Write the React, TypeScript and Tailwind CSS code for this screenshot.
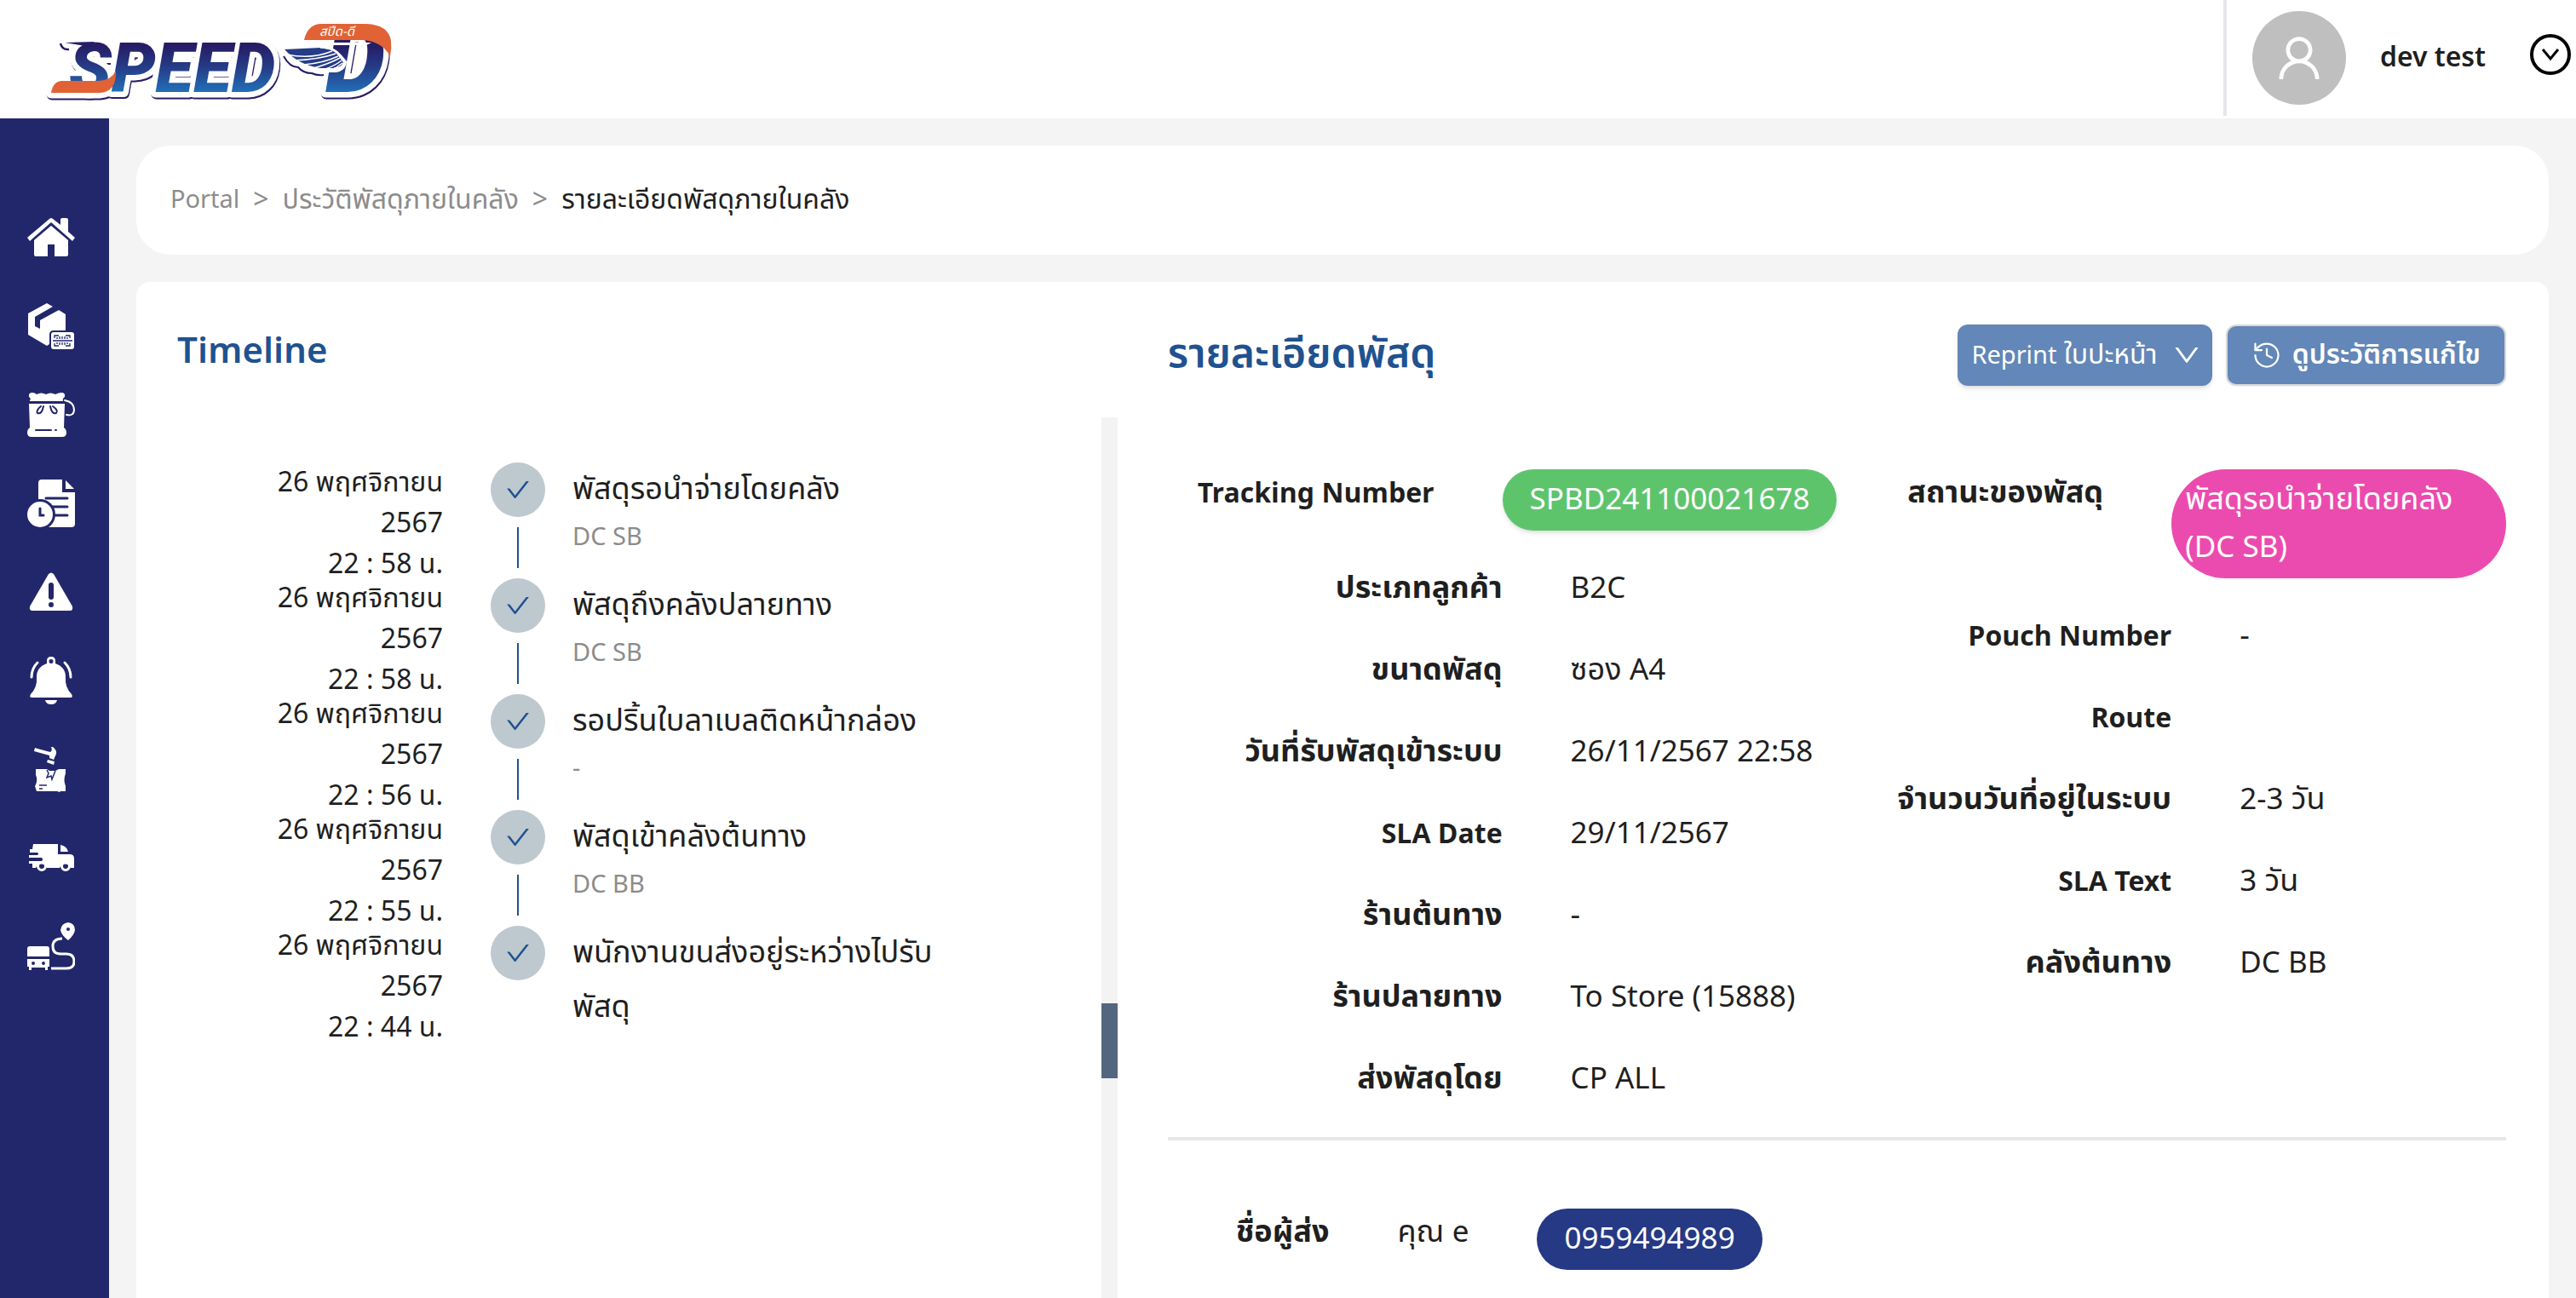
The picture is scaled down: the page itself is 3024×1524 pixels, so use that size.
import React from "react";
import { AiOutlineCheck, AiOutlineDown, AiOutlineUser } from "react-icons/ai";
import { History } from "lucide-react";

const NAVY = "#22276b";

function Logo() {
  return (
    <svg viewBox="50 10 430 120" className="h-[120px] w-[430px]" role="img" aria-label="SPEED-D">
      <defs>
        <linearGradient id="ink" gradientUnits="userSpaceOnUse" x1="0" y1="48" x2="0" y2="110">
          <stop offset="0.1" stopColor="#261d66" />
          <stop offset="0.5" stopColor="#263c87" />
          <stop offset="1" stopColor="#2173bb" />
        </linearGradient>
      </defs>
      {/* white outlined lettering with a dark drop edge */}
      <g
        className="[filter:drop-shadow(1px_2px_0_#261d66)]"
        stroke="#fff"
        strokeWidth="13"
        strokeLinejoin="round"
        paintOrder="stroke"
        fontFamily="Roboto"
        fontWeight="900"
        fontStyle="italic"
      >
        <path d="M60 109 Q62 96 72 95 H116 Q131 94 136 83 Q137 108 117 109 Z" fill="#fff" />
        <text x="81" y="108" fontSize="82" fill="url(#ink)">SPEED</text>
      </g>
      <g
        className="[filter:drop-shadow(1px_2px_0_#261d66)]"
        stroke="#fff"
        strokeWidth="13"
        strokeLinejoin="round"
        paintOrder="stroke"
        fontFamily="Roboto"
        fontWeight="900"
        fontStyle="italic"
      >
        <text x="382" y="108" fontSize="112" fill="url(#ink)">D</text>
      </g>
      <path d="M64 38 H334 V43 H64 Z" fill="#fff" />
      <path d="M76 50 L110 49 L112 56 Z" fill="#261d66" />
      <path d="M71 51 Q73 59 81 58" stroke="#261d66" strokeWidth="2.500" fill="none" />
      <path d="M60 109 Q62 96 72 95 H116 Q131 94 136 83 Q137 108 117 109 Z" fill="#e16335" />
      {/* orange cap of the D */}
      <path d="M350 16 H440 V24 H350 Z" fill="#fff" />
      <path d="M352 50 H436 L430 53 H352 Z" fill="#fff" />
      <path d="M357 47 Q361 29 376 28 H430 Q456 29 459 48 Q460 57 458 66 Q448 48 425 47 Z" fill="#e16335" />
      <text x="375" y="42" fontSize="15" fill="#fff" fontStyle="italic" fontFamily="Noto Sans Thai">สปีด-ดี</text>
      {/* wing */}
      <path d="M333 66 Q340 79 350 79 Q356 86 366 86 Q372 89 380 88" stroke="#261d66" strokeWidth="2" fill="none" />
      <path d="M334 58 L376 56 Q392 58 398 66 L404 73 Q402 82 391 82 H376 Q350 78 334 58 Z" fill="#263c87" stroke="#fff" strokeWidth="6" strokeLinejoin="round" />
      <path d="M334 58 L376 56 Q390 57 396 64 L403 73 Q401 80 391 80 H376 Q350 76 334 58 Z" fill="#263c87" />
      <path d="M337 64 Q365 70 390 60 M344 71 Q374 70 394 63 M356 76 Q380 74 397 66 M368 80 Q386 75 399 68 M379 82 Q392 78 401 71 M390 82 Q396 79 402 74" stroke="#fff" strokeWidth="1.500" fill="none" />
      <path d="M376 56 Q395 57 398 65 L404 73 Q402 81 392 80" stroke="#fff" strokeWidth="1.500" fill="none" />
    </svg>
  );
}

const navIcons: { label: string; art: React.ReactNode }[] = [
  {
    label: "Home",
    art: (
      <>
        <path d="M8 31 L28 14 L48 31 V48 Q48 50 46 50 H32 V36 H24 V50 H10 Q8 50 8 48 Z" />
        <path d="M39 7 Q39 5 41 5 H46 Q48 5 48 7 V21 L56 28 L53 32 L28 10 L3 32 L0 28 L26 6 Q28 4 30 6 L39 13 Z" />
      </>
    ),
  },
  {
    label: "Parcels",
    art: (
      <>
        <path d="M1 13 L23 1 L30 5 L9 17 V28 L15 31 V21 L37 9 L45 14 V33 H31 Q26 33 26 38 V49 L23 51 L1 38 Z" />
        <rect x="28" y="35" width="27" height="20" rx="3" />
        <path
          d="M32 42 V39 H37 M45 39 H50 V42 M32 48 V51 H37 M45 51 H50 V48 M30 45 H53 M35 41 V43 M38 40 V43 M41 40 V43 M44 40 V43 M47 41 V43 M35 47 V49 M38 47 V50 M41 47 V50 M44 47 V50 M47 47 V49"
          stroke={NAVY}
          strokeWidth="1.300"
          fill="none"
        />
      </>
    ),
  },
  {
    label: "Pouches",
    art: (
      <>
        <path d="M3 11 Q5 9 2 7 Q1 2 6 2 Q9 2 11 4 Q16 1 22 4 Q27 1 33 4 Q37 2 40 2 Q45 2 44 7 Q41 9 42 12 H3 Z" />
        <path d="M2 15 H44 L43 43 Q46 45 46 49 Q46 54 41 54 H5 Q0 54 0 49 Q0 45 3 43 Z" />
        <path d="M44 11 Q55 13 55 23 Q54 30 46 28" stroke="#fff" strokeWidth="2" fill="none" strokeLinecap="round" />
        <path
          d="M16 18 Q10 23 12 26 Q17 28 19 18 M30 18 Q37 23 34 26 Q29 28 27 18 M10 46 H28 M33 46 H34"
          stroke={NAVY}
          strokeWidth="2"
          fill="none"
          strokeLinecap="round"
        />
      </>
    ),
  },
  {
    label: "History",
    art: (
      <>
        <path d="M17 0 H41 V15 H56 V52 Q56 56 52 56 H13 V4 Q13 0 17 0 Z" />
        <path d="M45 1 L55 11 H45 Z" />
        <path d="M22 22 H47 M26 32 H47 M30 42 H47" stroke={NAVY} strokeWidth="3" strokeLinecap="round" />
        <circle cx="15" cy="41" r="18" fill={NAVY} />
        <circle cx="15" cy="41" r="15" />
        <path d="M15 34 V42 H19" stroke={NAVY} strokeWidth="3" strokeLinecap="round" fill="none" />
      </>
    ),
  },
  {
    label: "Warnings",
    art: (
      <>
        <path d="M25 7 Q28 4 31 7 L53 45 Q54 50 50 50 H6 Q2 50 3 45 Z" />
        <path d="M28 20 V34" stroke={NAVY} strokeWidth="6" strokeLinecap="round" />
        <circle cx="28" cy="43" r="3" fill={NAVY} />
      </>
    ),
  },
  {
    label: "Notifications",
    art: (
      <>
        <path
          fillRule="evenodd"
          d="M23 8 V5 Q23 0 28 0 Q33 0 33 5 V8 Q45 12 45 24 Q44 36 52 44 Q54 48 51 48 H5 Q2 48 4 44 Q12 36 11 24 Q11 12 23 8 Z M28 3 A2.500 2.500 0 1 0 28 8 A2.500 2.500 0 1 0 28 3 Z"
        />
        <path d="M21 51 H35 Q34 56 28 56 Q22 56 21 51 Z" />
        <path d="M12 7 Q5 14 5 24 M44 7 Q51 14 51 24" stroke="#fff" strokeWidth="3" strokeLinecap="round" fill="none" />
      </>
    ),
  },
  {
    label: "Damaged",
    art: (
      <>
        <path d="M9 3 L12 4 L27 8 Q30 6 28 2 L30 2 Q35 6 34 10 L31 17 L26 15 L26 12 L8 7 Z" />
        <path d="M24 17 L32 19 L31 23 L23 20 Z" />
        <path d="M10 28 H23 L26 30 H33 L37 28 H45 V33 Q42 41 45 48 V54 H39 L38 55 L35 54 H11 L9 48 Q13 41 10 35 Z" />
        <path d="M23 29 L25 33 L23 38 L28 36 L29 40 L33 30 M14 47 H23 M14 51 H18" stroke={NAVY} strokeWidth="1.500" fill="none" />
      </>
    ),
  },
  {
    label: "Delivery",
    art: (
      <>
        <path d="M7 12 H36 V24 H50 Q55 24 55 29 V40 H51 A7 7 0 0 0 38 40 H23 A7 7 0 0 0 10 40 H6 V35 H2 V32 H17 Q19 30 17 28 H2 V25 H12 Q14 23 12 22 H3 V18 H6 Z" />
        <path d="M39 13 Q46 14 48 21 H39 Z" />
        <path
          fillRule="evenodd"
          d="M17 32 A6 6 0 1 0 17 44 A6 6 0 1 0 17 32 Z M17 35 A3 3 0 1 1 17 41 A3 3 0 1 1 17 35 Z M45 32 A6 6 0 1 0 45 44 A6 6 0 1 0 45 32 Z M45 35 A3 3 0 1 1 45 41 A3 3 0 1 1 45 35 Z"
        />
      </>
    ),
  },
  {
    label: "Routes",
    art: (
      <>
        <path d="M0 40 V31 Q0 28 3 28 H23 Q26 28 26 31 V40 Z" />
        <path
          fillRule="evenodd"
          d="M0 43 H26 V52 H24 V56 H21 V53 H5 V56 H2 V52 H0 Z M7 46 A2 2 0 1 0 7 50 A2 2 0 1 0 7 46 Z M19 46 A2 2 0 1 0 19 50 A2 2 0 1 0 19 46 Z"
        />
        <path
          fillRule="evenodd"
          d="M48 0 Q56 1 56 9 Q55 15 48 21 Q40 15 39 9 Q40 1 48 0 Z M48 6 A2 2 0 1 0 48 10 A2 2 0 1 0 48 6 Z"
        />
        <path d="M41 19 Q30 19 30 28 Q30 37 39 37 H46 Q55 37 55 46 Q55 54 46 54 H28" stroke="#fff" strokeWidth="3" fill="none" />
      </>
    ),
  },
];

const timeline = [
  { time: "22 : 58 น.", title: "พัสดุรอนำจ่ายโดยคลัง", place: "DC SB" },
  { time: "22 : 58 น.", title: "พัสดุถึงคลังปลายทาง", place: "DC SB" },
  { time: "22 : 56 น.", title: "รอปริ้นใบลาเบลติดหน้ากล่อง", place: "-" },
  { time: "22 : 55 น.", title: "พัสดุเข้าคลังต้นทาง", place: "DC BB" },
  { time: "22 : 44 น.", title: "พนักงานขนส่งอยู่ระหว่างไปรับพัสดุ", place: "" },
];

function Latin({ children }: { children: React.ReactNode }) {
  return <span className="text-[35px] leading-none">{children}</span>;
}

function LatinLabel({ children }: { children: React.ReactNode }) {
  return <span className="text-[32px] leading-none">{children}</span>;
}

function Field({ label, children }: { label: React.ReactNode; children?: React.ReactNode }) {
  return (
    <div className="grid grid-cols-2">
      <dt className="text-right font-bold">{label}</dt>
      <dd className="pl-20">{children}</dd>
    </div>
  );
}

export default function App() {
  return (
    <div className="flex min-h-screen flex-col bg-[#f4f4f4] font-['Noto_Sans_Thai','Noto_Sans',sans-serif] text-[#1f1f1f]">
      <header className="flex h-[139px] items-start justify-between bg-white">
        <a href="#" className="ml-[50px] mt-[10px]">
          <Logo />
        </a>
        <div className="flex h-[136px] items-center border-l-4 border-gray-200 pl-[30px] pr-[6px]">
          <span className="flex size-[110px] items-center justify-center rounded-full bg-[#bfbfbf] text-white">
            <AiOutlineUser className="size-16" />
          </span>
          <span className="ml-10 text-[32px] font-semibold leading-[48px]">dev test</span>
          <button aria-label="Account menu" className="mb-2 ml-[52px]">
            <svg viewBox="0 0 48 48" className="size-12" fill="none" stroke="#000" strokeWidth="4">
              <circle cx="24" cy="24" r="22" />
              <path d="M15 18 L24 29 L33 18" strokeWidth="3" />
            </svg>
          </button>
        </div>
      </header>

      <div className="flex flex-1">
        <nav className="w-32 shrink-0 bg-[#22276b] pt-28">
          <ul className="flex flex-col gap-12 pl-8">
            {navIcons.map((n) => (
              <li key={n.label}>
                <a href="#" aria-label={n.label} className="block size-14">
                  <svg viewBox="0 0 56 56" className="size-14" fill="#fff">
                    {n.art}
                  </svg>
                </a>
              </li>
            ))}
          </ul>
        </nav>

        <main className="flex min-w-0 flex-1 flex-col gap-8 px-8 pt-8">
          <nav className="flex items-center gap-4 rounded-[40px] bg-white px-10 py-10 text-[32px] leading-[48px] text-[#8c8c8c]">
            <a href="#" className="text-[29px]">Portal</a>
            <span className="text-[32px]">&gt;</span>
            <a href="#">ประวัติพัสดุภายในคลัง</a>
            <span className="text-[32px]">&gt;</span>
            <span className="text-[#1f1f1f]">รายละเอียดพัสดุภายในคลัง</span>
          </nav>

          <section className="flex flex-1 flex-col rounded-t-2xl bg-white pt-[50px]">
            <div className="flex h-[72px] text-[48px] font-semibold leading-[64px] text-[#1f528f]">
              <h2 className="w-2/5 pl-12 text-[42px]">Timeline</h2>
              <div className="flex flex-1 items-center justify-between pl-[78px] pr-[50px]">
                <h2>รายละเอียดพัสดุ</h2>
                <div className="flex gap-4 text-[32px] leading-[48px] text-white">
                  <button className="flex h-[72px] items-center gap-4 rounded-xl bg-[#6287b8] pl-4 pr-3 font-normal shadow-md">
                    <span>
                      <span className="text-[29px] leading-none">Reprint</span> ใบปะหน้า
                    </span>
                    <AiOutlineDown className="size-9" />
                  </button>
                  <button className="flex h-[72px] items-center gap-3 rounded-xl border-2 border-[#d9d9d9] bg-[#6287b8] px-7 shadow-xs">
                    <History className="size-9" strokeWidth={1.5} />
                    <span>ดูประวัติการแก้ไข</span>
                  </button>
                </div>
              </div>
            </div>

            <div className="mt-[37px] flex flex-1">
              <ol className="w-2/5 pt-[53px]">
                {timeline.map((t, i) => (
                  <li key={i} className="flex h-[136px]">
                    <div className="w-[360px] shrink-0 text-right text-[32px] leading-[48px]">
                      <div>26 พฤศจิกายน</div>
                      <div>2567</div>
                      <div>{t.time}</div>
                    </div>
                    <div className="ml-14 flex w-16 shrink-0 flex-col items-center">
                      <span className="flex size-16 items-center justify-center rounded-full bg-[#bec8cf] text-[#1f528f]">
                        <AiOutlineCheck className="size-8" />
                      </span>
                      {i < timeline.length - 1 && <span className="mt-3 h-12 w-[2px] bg-[#1f528f]" />}
                    </div>
                    <div className="ml-8 w-[450px]">
                      <div className="text-[36px] leading-[64px]">{t.title}</div>
                      <div className="text-[29px] leading-[48px] text-[#8c8c8c]">{t.place}</div>
                    </div>
                  </li>
                ))}
              </ol>

              <div className="w-[19px] shrink-0 bg-[#f3f3f3] pt-[688px]">
                <div className="h-[88px] bg-[#52667f]" />
              </div>

              <div className="flex-1 pl-[59px] pr-[50px] pt-[61px] text-[36px] leading-[56px]">
                <div className="grid grid-cols-2 border-b-4 border-gray-200 pb-10">
                  <dl className="flex flex-col gap-10">
                    <div className="grid grid-cols-2">
                      <dt className="pr-20 text-right font-bold">
                        <LatinLabel>Tracking Number</LatinLabel>
                      </dt>
                      <dd>
                        <button className="block h-[72px] w-full whitespace-nowrap rounded-full bg-[#5ec46c] text-white shadow-md">
                          <Latin>SPBD241100021678</Latin>
                        </button>
                      </dd>
                    </div>
                    <Field label="ประเภทลูกค้า"><Latin>B2C</Latin></Field>
                    <Field label="ขนาดพัสดุ">ซอง <Latin>A4</Latin></Field>
                    <Field label="วันที่รับพัสดุเข้าระบบ"><Latin>26/11/2567 22:58</Latin></Field>
                    <Field label={<LatinLabel>SLA Date</LatinLabel>}><Latin>29/11/2567</Latin></Field>
                    <Field label="ร้านต้นทาง">-</Field>
                    <Field label="ร้านปลายทาง"><Latin>To Store (15888)</Latin></Field>
                    <Field label="ส่งพัสดุโดย"><Latin>CP ALL</Latin></Field>
                  </dl>
                  <dl className="flex flex-col gap-10">
                    <div className="grid grid-cols-2">
                      <dt className="pr-20 text-right font-bold">สถานะของพัสดุ</dt>
                      <dd className="rounded-full bg-[#eb4bae] px-4 py-2 text-white">
                        พัสดุรอนำจ่ายโดยคลัง <Latin>(DC SB)</Latin>
                      </dd>
                    </div>
                    <Field label={<LatinLabel>Pouch Number</LatinLabel>}>-</Field>
                    <Field label={<LatinLabel>Route</LatinLabel>} />
                    <Field label="จำนวนวันที่อยู่ในระบบ"><Latin>2-3</Latin> วัน</Field>
                    <Field label={<LatinLabel>SLA Text</LatinLabel>}><Latin>3</Latin> วัน</Field>
                    <Field label="คลังต้นทาง"><Latin>DC BB</Latin></Field>
                  </dl>
                </div>

                <div className="flex items-start gap-20 pl-20 pt-20">
                  <span className="font-bold">ชื่อผู้ส่ง</span>
                  <span>คุณ <Latin>e</Latin></span>
                  <a href="tel:0959494989" className="rounded-full bg-[#253984] px-8 py-2 text-white">
                    <Latin>0959494989</Latin>
                  </a>
                </div>
              </div>
            </div>
          </section>
        </main>
      </div>
    </div>
  );
}
